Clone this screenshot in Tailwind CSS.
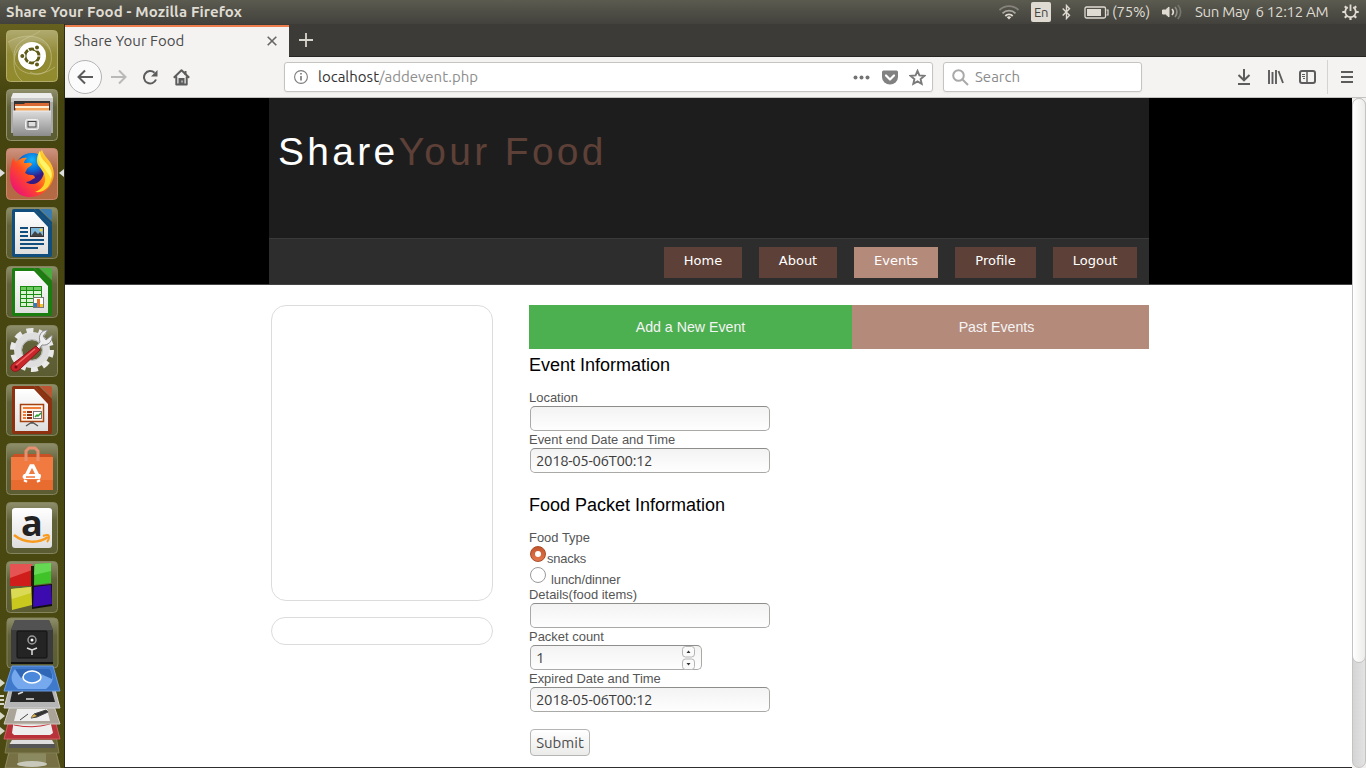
<!DOCTYPE html>
<html lang="en">
<head>
<meta charset="utf-8">
<title>Share Your Food</title>
<script src="https://cdn.jsdelivr.net/npm/@tailwindcss/browser@4"></script>
</head>
<body class="w-[1366px] h-[768px] overflow-hidden flex flex-col bg-white font-['Ubuntu','Noto_Sans',sans-serif]">

<!-- System panel -->
<header class="h-6 shrink-0 flex items-center justify-between bg-linear-to-b from-[#5c5b50] to-[#42413c] text-[#dfdbd2]">
  <div class="pl-[6px] text-[15px] font-bold leading-6 tracking-[0.12px] whitespace-nowrap">Share Your Food - Mozilla Firefox</div>
  <div class="flex items-center pr-[7px] text-[15px] leading-6 whitespace-nowrap">
    <svg width="20" height="16" viewBox="0 0 20 16" fill="none" stroke-width="1.800" class="mr-[12px]"><path d="M0.500 6a13.500 13.500 0 0 1 19 0" stroke="#85837b"/><path d="M3.500 9.300a9.200 9.200 0 0 1 13 0" stroke="#aaa79f"/><path d="M6.300 12a5.300 5.300 0 0 1 7.400 0" stroke="#dfdbd2"/><path d="M10 15.500L7.800 13.300a3.200 3.200 0 0 1 4.400 0z" fill="#dfdbd2"/></svg>
    <span class="w-5 h-5 rounded-[2px] bg-[#dfdbd2] text-[#45443f] text-[13px] leading-5 text-center mr-[11px] tracking-[-0.3px]">En</span>
    <svg width="9" height="16" viewBox="0 0 9 16" fill="none" stroke="#dfdbd2" stroke-width="1.400" class="mr-[13px]"><path d="M0.700 4.500L7.500 11.300 4.500 14.500V1.500L7.500 4.700 0.700 11.500"/></svg>
    <svg width="25" height="13" viewBox="0 0 25 13" class="mr-[3px]"><rect x="1" y="1" width="20.500" height="11" rx="1.500" fill="none" stroke="#dfdbd2" stroke-width="1.300"/><rect x="3" y="3" width="14" height="7" fill="#dfdbd2"/><path d="M22.500 4h1.500v5h-1.500" fill="none" stroke="#dfdbd2" stroke-width="1.200"/></svg>
    <span class="w-[38px] mr-[12px]"><span class="tracking-[-0.2px]">(75%)</span></span>
    <svg width="20" height="16" viewBox="0 0 20 16" fill="none" stroke-width="1.700" class="mr-[13px]"><path d="M0.500 6h3L7 3v10L3.500 10h-3z" fill="#dfdbd2" stroke="#dfdbd2" stroke-width="1"/><path d="M10 5a4.500 4.500 0 0 1 0 6" stroke="#dfdbd2"/><path d="M13 3a7.500 7.500 0 0 1 0 10" stroke="#8f8d85"/><path d="M15.800 1a10 10 0 0 1 0 14" stroke="#77756d"/></svg>
    <span class="w-[134px] mr-[13px]"><span class="tracking-[-0.3px] whitespace-pre">Sun May  6 12:12 AM</span></span>
    <svg width="17" height="16" viewBox="0 0 17 16" fill="none" stroke="#dfdbd2" stroke-width="1.800"><path d="M5.800 3.300a5.300 5.300 0 1 0 5.400 0M8.500 0.500v6.500"/><path d="M0.300 8h3M13.700 8h3M8.500 13v3M2.800 2.300l2 2M14.200 2.300l-2 2M2.800 13.700l2-2M14.200 13.700l-2-2" stroke-width="2.200"/></svg>
  </div>
</header>

<div class="flex flex-1 min-h-0">

<!-- Launcher -->
<aside class="w-[65px] shrink-0 flex flex-col items-start pt-[6px] pl-[6px] gap-[7px] border-r border-[#2c2c14] bg-linear-to-b from-[#67611f] via-[#45440f] via-10% to-[#4c4a12] relative overflow-hidden">
  <svg class="shrink-0" width="52" height="52" viewBox="0 0 52 52">
    <defs>
      <linearGradient id="gold" x2="0" y2="1"><stop stop-color="#b0aa70"/><stop offset=".45" stop-color="#918a36"/><stop offset="1" stop-color="#928b2c"/></linearGradient>
      <linearGradient id="tile" x2="0" y2="1"><stop stop-color="#8f8f6c"/><stop offset=".35" stop-color="#62623a"/><stop offset="1" stop-color="#5c5c32"/></linearGradient>
      <linearGradient id="silver" x2="0" y2="1"><stop stop-color="#dcdcdc"/><stop offset="1" stop-color="#8c8c8c"/></linearGradient>
      <linearGradient id="paper" x2="0" y2="1"><stop stop-color="#ffffff"/><stop offset="1" stop-color="#dedede"/></linearGradient>
    </defs>
    <rect x=".5" y=".5" width="51" height="51" rx="4" fill="url(#gold)" stroke="#b3ad6d"/>
    <g fill="none" stroke="#c9c491" stroke-opacity=".6"><path d="M2 12C18 2 42 4 45 23S33 48 24 42"/><path d="M8 27C8 8 26 8 34 1"/><path d="M8 27C8 44 32 50 49 37"/><path d="M16 51C5 42 6 24 15 16"/></g>
    <path d="M2 12C18 2 42 4 45 23C38 8 20 5 8 27z" fill="#fff" opacity=".12"/>
    <circle cx="26" cy="27" r="14" fill="#6b6420" opacity=".4"/><circle cx="26" cy="26" r="14" fill="#fff"/>
    <circle cx="26" cy="26" r="7" fill="none" stroke="#5f5a16" stroke-width="3"/>
    <g stroke="#fff" stroke-width="1.200"><path d="M26 26h13M26 26l-6.500-11.300M26 26l-6.500 11.300"/></g><circle cx="26" cy="26" r="5.200" fill="#fff"/>
    <g fill="#5f5a16" stroke="#fff" stroke-width="1.200"><circle cx="16.300" cy="26" r="2.600"/><circle cx="31" cy="17.500" r="2.600"/><circle cx="31" cy="34.500" r="2.600"/></g>
  </svg>
  <svg class="shrink-0" width="52" height="52" viewBox="0 0 52 52">
    <rect x=".5" y=".5" width="51" height="51" rx="4" fill="url(#tile)" stroke="#92926b"/>
    <path d="M7 4h38l2 6v34H5V10z" fill="#a9a9a9"/><path d="M7 4h38l2 5H5z" fill="#ececec"/><path d="M5 9h42v4H5z" fill="#c9c9c9"/>
    <rect x="8" y="12" width="36" height="10" fill="#333"/><path d="M9 15h9l1-1h24v8H9z" fill="#d96a35"/><path d="M9 17h34v2H9z" fill="#fff1d8"/><path d="M10 19h33v4H10z" fill="#f3a55c"/>
    <rect x="7" y="22" width="38" height="25" rx="1" fill="url(#silver)"/><path d="M7 22h38" stroke="#eee"/>
    <rect x="19.500" y="30.500" width="13" height="10" rx="2" fill="#d0d0d0" stroke="#efefef"/><rect x="22" y="32.500" width="8" height="5.500" fill="#ddd" stroke="#444"/>
  </svg>
  <svg class="shrink-0" width="52" height="52" viewBox="0 0 52 52">
    <defs><linearGradient id="fx" x1="1" y1="0" x2=".1" y2=".9"><stop stop-color="#fff04a"/><stop offset=".38" stop-color="#ffa416"/><stop offset=".65" stop-color="#ff4a25"/><stop offset="1" stop-color="#ed1277"/></linearGradient><linearGradient id="fire" x2="0" y2="1"><stop stop-color="#cf9380"/><stop offset=".4" stop-color="#ae6947"/><stop offset="1" stop-color="#b56a43"/></linearGradient><radialGradient id="globe" cy=".2"><stop stop-color="#12b5fa"/><stop offset=".6" stop-color="#0869d8"/><stop offset="1" stop-color="#371b84"/></radialGradient></defs>
    <rect x=".5" y=".5" width="51" height="51" rx="4" fill="url(#fire)" stroke="#c88a6f"/>
    <circle cx="26" cy="22" r="17" fill="url(#globe)"/>
    <path d="M5 18C5 14 7 11 8 9c0 2 1 4 2 5 3-3 7-5 11-4-2 2-3 3-3 5 3 0 7-1 8 1 0 2-4 3-5 5l-2 4c2 1 3 2 7 2 2 0 3 2 3 3-3 1-5 4-9 4 5 4 13 2 16-4 3-5 2-9 0-11-2-5-4-10-3-14l3-3c1 4 5 8 8 12 5 8 5 15 1 22-5 9-13 13-21 13C12 49 4 40 4 28c0-3 0-7 1-10z" fill="url(#fx)"/>
    <path d="M34 3c0 5 2 8 6 12 6 6 7 13 4 20-2 6-8 10-15 9 8-3 11-9 10-15-1-5-4-8-7-12-2-5-1-10 2-14z" fill="#ffd62c"/>
    <path d="M34 3c0 5 2 8 6 12 5 5 7 10 5 16-2-5-5-8-8-12-5-6-6-11-3-16z" fill="#fff36a"/>
  </svg>
  <svg class="shrink-0" width="52" height="52" viewBox="0 0 52 52">
    <rect x=".5" y=".5" width="51" height="51" rx="4" fill="url(#tile)" stroke="#84845e"/>
    <path d="M8 2h20l18 17v29q0 2-2 2H8q-2 0-2-2V4q0-2 2-2z" fill="#114d7d"/><path d="M28 2h5l13 13v4z" fill="#114d7d"/><path d="M34 2h10q2 0 2 2v10z" fill="#3a7cb0"/>
    <path d="M9 5h19l14 15v27H9z" fill="url(#paper)"/>
    <path d="M14 21h8M14 25h8M14 29h8M14 33h24M14 37h24M14 41h18" stroke="#114d7d" stroke-width="2"/>
    <rect x="24.500" y="20.500" width="13" height="9" fill="#7db9dd" stroke="#333"/><path d="M25 29l4-5 3 3 2-2 3 4z" fill="#444"/><circle cx="35" cy="23" r="1.500" fill="#f4d03f"/>
  </svg>
  <svg class="shrink-0" width="52" height="52" viewBox="0 0 52 52">
    <rect x=".5" y=".5" width="51" height="51" rx="4" fill="url(#tile)" stroke="#84845e"/>
    <path d="M8 2h20l18 17v29q0 2-2 2H8q-2 0-2-2V4q0-2 2-2z" fill="#1a7d0f"/><path d="M28 2h5l13 13v4z" fill="#1a7d0f"/><path d="M34 2h10q2 0 2 2v10z" fill="#47ad3b"/>
    <path d="M9 5h19l14 15v27H9z" fill="url(#paper)"/>
    <rect x="14.500" y="20.500" width="21" height="20" fill="#d9f3d3" stroke="#1a8a10"/><path d="M15 21h20v3H15z" fill="#6fca63"/><path d="M14 24.500h22M14 28.500h22M14 32.500h22M14 36.500h22M20.500 20v21M27.500 20v21" stroke="#1a8a10"/>
    <rect x="27.500" y="31.500" width="10" height="10" fill="#fff" stroke="#777"/><path d="M28 37h3v4h-3z" fill="#2a7dc5"/><path d="M31 33h3v8h-3z" fill="#e3701e"/><path d="M34 38h3v3h-3z" fill="#f1c62c"/>
  </svg>
  <svg class="shrink-0" width="52" height="52" viewBox="0 0 52 52">
    <rect x=".5" y=".5" width="51" height="51" rx="4" fill="url(#tile)" stroke="#84845e"/>
    <circle cx="26" cy="25" r="14" fill="none" stroke="#dedede" stroke-width="8"/><circle cx="26" cy="25" r="19.500" fill="none" stroke="#e9e9e9" stroke-width="5" stroke-dasharray="7 5.250"/>
    <circle cx="26" cy="25" r="10.500" fill="none" stroke="#b5b5b5"/>
    <path d="M28 24l6-7c-2-6 1-12 8-12l-5 6 3 4 6-5c1 6-4 11-10 10l-6 8z" fill="#eee" stroke="#888"/>
    <path d="M30 21l4 4-20 19c-3 3-6 3-8 1s-1-5 2-7z" fill="#c9252b" stroke="#8f1419"/><path d="M29 24L10 40" stroke="#ee6b6b" stroke-width="1.500"/><circle cx="10" cy="42" r="1.500" fill="#6d0f12"/>
  </svg>
  <svg class="shrink-0" width="52" height="52" viewBox="0 0 52 52">
    <rect x=".5" y=".5" width="51" height="51" rx="4" fill="url(#tile)" stroke="#84845e"/>
    <path d="M8 2h20l18 17v29q0 2-2 2H8q-2 0-2-2V4q0-2 2-2z" fill="#8d3110"/><path d="M28 2h5l13 13v4z" fill="#8d3110"/><path d="M34 2h10q2 0 2 2v10z" fill="#bd5532"/>
    <path d="M9 5h19l14 15v27H9z" fill="url(#paper)"/>
    <rect x="14.500" y="20.500" width="23" height="17" fill="#fff3e8" stroke="#a3410f" stroke-width="1.500"/><path d="M17 24h18" stroke="#ef7d3a" stroke-width="2"/><path d="M17 28h3M17 31h3M17 34h3" stroke="#ef7d3a" stroke-width="2"/><path d="M21 28h5M21 31h5M21 34h5" stroke="#8d3110" stroke-width="2"/><rect x="27.500" y="27.500" width="8" height="7" fill="#fff" stroke="#777"/><path d="M29 33l2-2 1 1 3-3" stroke="#24a12a" stroke-width="1.500" fill="none"/><path d="M26 38l-6 4M26 38l6 4M24 39h4" stroke="#555" stroke-width="1.500"/>
  </svg>
  <svg class="shrink-0" width="52" height="52" viewBox="0 0 52 52">
    <rect x=".5" y=".5" width="51" height="51" rx="4" fill="url(#tile)" stroke="#84845e"/>
    <path d="M6 14l2-3h36l3 3z" fill="#c95023"/><path d="M5 14h42v33H5z" fill="#f07a3f"/><path d="M5 37h42v10H5z" fill="#e86c2f"/>
    <path d="M20 18V8l3-3h6l3 3v10" fill="none" stroke="#e79070" stroke-width="3"/>
    <g fill="none" stroke="#fff" stroke-width="3.500"><path d="M20 33l5-10h2l5 10M19 39l1-2M33 39l-1-2"/></g><path d="M18 31h16q2 1 0 5H18q-3-2 0-5z" fill="#fff"/><path d="M20 34h9" stroke="#ef7438" stroke-width="1.500"/>
  </svg>
  <svg class="shrink-0 overflow-visible" width="52" height="52" viewBox="0 0 52 52">
    <rect x=".5" y=".5" width="51" height="51" rx="4" fill="url(#tile)" stroke="#84845e"/>
    <rect x="6" y="6" width="40" height="40" rx="3" fill="url(#paper)"/>
    <text x="15" y="34" font-family="Open Sans, Noto Sans, sans-serif" font-size="36" font-weight="bold" fill="#222">a</text>
    <path d="M8 33c10 8 24 9 34 2" fill="none" stroke="#f79a1e" stroke-width="2.500"/><path d="M37 34c5-2 6-1 6 1s-1 4-2 5" fill="none" stroke="#f79a1e" stroke-width="2"/>
  </svg>
  <svg class="shrink-0" width="52" height="52" viewBox="0 0 52 52">
    <rect x=".5" y=".5" width="51" height="51" rx="4" fill="url(#tile)" stroke="#84845e"/>
    <path d="M26 25l20-2v22l-20 3z" fill="#111"/>
    <path d="M4 3h22v22H4z" fill="#cf1d1b"/><path d="M4 3h22v6L4 17z" fill="#e55452"/><path d="M29 3l16-1v20l-17 2z" fill="#3fc328"/><path d="M29 3l16-1v8L28 14z" fill="#66d952"/><path d="M5 28l20-2 1 18-20 5z" fill="#c9c81f"/><path d="M5 28l20-2v6L6 38z" fill="#dbda54"/><path d="M28 26l17-2 1 19-19 3z" fill="#3c0bb0"/><path d="M25 5h3v20h-3z" fill="#172008"/>
  </svg>
  <svg class="shrink-0 -ml-[6px] -mt-[7px]" width="64" height="155" viewBox="0 0 64 155">
    <rect x="7" y="5" width="51" height="50" rx="4" fill="url(#tile)" stroke="#84845e"/>
    <path d="M15 7h34l4 10v34H11V17z" fill="#3c3c3c"/><path d="M15 7h34l4 10H11z" fill="#525252"/><rect x="17" y="18" width="30" height="27" rx="1" fill="#242424" stroke="#111"/><circle cx="32" cy="27" r="4" fill="none" stroke="#999" stroke-width="1.500"/><circle cx="32" cy="27" r="1.500" fill="#fff"/><path d="M32 37v5M32 37l-5-2M32 37l5-2" stroke="#ddd" stroke-width="1.500"/><path d="M11 50h42" stroke="#111" stroke-width="2"/>
    <path d="M11 131h43l6 24H5z" fill="#777044" stroke="#918b60"/><path d="M18 138h28v13H18z" fill="#8b895f"/><ellipse cx="32" cy="151" rx="15" ry="3" fill="#c8c8bb"/>
    <path d="M9 117h46l4 23H5z" fill="#6a6538" stroke="#827d52"/><path d="M12 127h40l3 5v3H9v-3z" fill="#ddd"/><path d="M9 131h46v4H9z" fill="#555"/>
    <path d="M9 107h46l5 19H4z" fill="#b8323a" stroke="#d25b61"/><path d="M14 107h36l3 13-3 2H14l-2-2z" fill="#eee"/><path d="M14 112q18 4 36-1" stroke="#c42f35" fill="none"/>
    <path d="M10 93h44l6 18H4z" fill="#aaa397" stroke="#ccc7bd"/><path d="M17 96h30l3 12H14z" fill="#eee"/><path d="M20 107l8-6M31 105l3-4 12-4 2 2-11 5z" stroke="#444" fill="#333"/><path d="M31 105l3-4 3 2z" fill="#ddb14b"/>
    <path d="M10 73h44l6 22H4z" fill="#b5b5b5" stroke="#d5d5d5"/><path d="M13 75h38l4 14H10z" fill="#262626"/><path d="M18 81l5-2M26 86h8" stroke="#ddd" stroke-width="1.500"/>
    <path d="M12 53h41l7 25H4z" fill="#3f79cc" stroke="#6b9bde"/><path d="M15 56h35c5 8 3 14-4 20H18c-8-7-8-13-3-20z" fill="#75a8ec"/><path d="M15 56h35c2 4 3 7 2 10L32 57 21 65z" fill="#2f66b6"/><ellipse cx="32" cy="64" rx="9" ry="6" fill="#4a88db" stroke="#fff" stroke-width="1.500"/>
    <g fill="#d8d8c8"><path d="M0 66l5 4-5 4z"/><path d="M0 82h4v2H0zM0 86h4v2H0zM0 90h4v2H0z"/><path d="M0 99l5 4-5 4zM0 114l5 4-5 4z"/></g>
  </svg>
  <!-- running / focused markers -->
  <span class="absolute left-0 top-[145px] border-y-4 border-l-[5px] border-y-transparent border-l-[#dedede]"></span>
  <span class="absolute right-0 top-[145px] border-y-4 border-r-[5px] border-y-transparent border-r-[#dedede]"></span>
</aside>

<!-- Firefox window -->
<div class="flex-1 min-w-0 flex flex-col">
  <div class="h-[33px] shrink-0 flex items-start bg-[#3c3b37] border-b border-[#272622]">
    <div class="w-[224px] h-[33px] mt-px border-t-2 border-[#ee7d4e] bg-[#f4f3f2] flex items-center justify-between pl-[9px] pr-[12px] text-[15px] text-[#4a4a4a]">
      <span class="-mt-[3px]">Share Your Food</span>
      <svg class="-mt-[3px]" width="10" height="10" viewBox="0 0 10 10" stroke="#666" stroke-width="1.600"><path d="M.7.7l8.600 8.600M9.300.7L.7 9.300"/></svg>
    </div>
    <svg class="ml-[10px] mt-[9px]" width="14" height="14" viewBox="0 0 14 14" stroke="#d8d5cc" stroke-width="1.800"><path d="M7 0v14M0 7h14"/></svg>
  </div>

  <div class="h-[41px] shrink-0 flex items-center bg-[#f4f3f2] border-b border-[#c3c2c0] text-[15px]">
    <div class="w-[34px] h-[34px] ml-[3px] rounded-full border border-[#b3b3b3] bg-[#fbfbfb] flex items-center justify-center">
      <svg width="17" height="16" viewBox="0 0 17 16" fill="none" stroke="#5c5c5c" stroke-width="2"><path d="M16 8H2M8 1.500L1.500 8 8 14.500"/></svg>
    </div>
    <svg class="ml-[8px]" width="17" height="16" viewBox="0 0 17 16" fill="none" stroke="#b9b9b8" stroke-width="2"><path d="M1 8h14M9 1.500L15.500 8 9 14.500"/></svg>
    <svg class="ml-[15px]" width="16" height="16" viewBox="0 0 16 16"><path d="M14 10.500A6.200 6.200 0 1 1 12.500 3.800" fill="none" stroke="#5c5c5c" stroke-width="2"/><path d="M15.500 1v6.500H9z" fill="#5c5c5c"/></svg>
    <svg class="ml-[15px]" width="17" height="17" viewBox="0 0 17 17" fill="none" stroke="#5c5c5c" stroke-width="2"><path d="M.8 8.800L8.500 1.300l7.700 7.500M3.300 7.500v8h10.400v-8" stroke-linejoin="round"/><path d="M6.500 15.500V10h4v5.500" fill="#5c5c5c"/><path d="M12.500 2v4"/><path d="M9 11.500v2" stroke="#f4f3f2" stroke-width="1"/></svg>

    <div class="w-[649px] h-[30px] ml-[94px] flex items-center rounded-[3px] border border-[#c6c4c2] bg-white shadow-xs">
      <svg class="ml-[9px]" width="14" height="14" viewBox="0 0 14 14" fill="none" stroke="#7c7c7c"><circle cx="7" cy="7" r="6.400" stroke-width="1.100"/><path d="M7 6v4.500M7 3v1.600" stroke-width="1.700"/></svg>
      <span class="ml-[10px] w-[400px] text-[#8e8e8e]"><span class="text-[#333]">localhost</span>/addevent.php</span>
      <svg class="ml-[135px]" width="17" height="5" viewBox="0 0 17 5" fill="#737373"><circle cx="2.500" cy="2.500" r="2"/><circle cx="8.500" cy="2.500" r="2"/><circle cx="14.500" cy="2.500" r="2"/></svg>
      <svg class="ml-[12px]" width="16" height="15" viewBox="0 0 16 15"><path d="M1.500.5h13q1.500 0 1.500 1.500v5a8 7.500 0 0 1-16 0V2Q0 .5 1.500.5z" fill="#818181"/><path d="M4 5.500l4 4 4-4" fill="none" stroke="#fff" stroke-width="2.200" stroke-linecap="round" stroke-linejoin="round"/></svg>
      <svg class="ml-[11px]" width="17" height="17" viewBox="0 0 17 17" fill="none" stroke="#7a7a7a" stroke-width="1.900" stroke-linejoin="miter"><path d="M8.500 1.900l1.900 4.500 4.900.5-3.700 3.200 1.100 4.800-4.200-2.500-4.200 2.500 1.100-4.800-3.700-3.200 4.900-.5z"/></svg>
    </div>
    <div class="w-[199px] h-[30px] ml-[10px] flex items-center rounded-[3px] border border-[#c6c4c2] bg-white shadow-xs">
      <svg class="ml-[8px]" width="17" height="17" viewBox="0 0 17 17" fill="none" stroke="#a9a9a9" stroke-width="2"><circle cx="6.500" cy="6.500" r="5.300"/><path d="M10.500 10.500l5.500 5.500"/></svg>
      <span class="ml-[6px] text-[#8b8b8b]">Search</span>
    </div>
    <svg class="ml-[95px]" width="14" height="16" viewBox="0 0 14 16" fill="none" stroke="#5c5c5c" stroke-width="2"><path d="M7 0v11M1.500 6L7 11.300 12.500 6M1 15h12"/></svg>
    <svg class="ml-[17px]" width="16" height="14" viewBox="0 0 16 14" stroke="#5c5c5c" stroke-width="1.900"><path d="M1 0v14M4.500 2v12M8 0v14M10.500 1l4.500 12"/></svg>
    <svg class="ml-[15px]" width="17" height="14" viewBox="0 0 17 14" fill="none" stroke="#5c5c5c"><rect x="1" y="1" width="15" height="12" rx="2" stroke-width="2"/><path d="M8 1v12" stroke-width="1.500"/><path d="M3 4.500h3M3 6.500h3M4 8.500h2" stroke-width="1"/></svg>
    <span class="ml-[11px] w-px h-[34px] bg-[#d4d3d2]"></span>
    <svg class="ml-[13px]" width="12" height="12" viewBox="0 0 12 12" stroke="#5c5c5c" stroke-width="2"><path d="M0 1h12M0 6h12M0 11h12"/></svg>
  </div>

  <div class="flex-1 min-h-0 flex">
    <!-- Web page -->
    <div class="w-[1287px] bg-white border-b border-[#2e2e2e] font-['Liberation_Sans',Arial,sans-serif] text-[#555]">
      <div class="h-[187px] bg-black border-b border-[#444]">
        <div class="w-[880px] ml-[204px] h-[186px] flex flex-col">
          <div class="h-[140px] pt-[31px] pl-[9px] bg-[#1d1d1d] text-[38.9px] leading-[45px] tracking-[3.36px] text-white whitespace-nowrap">Share<span class="text-[#5d4037]">Your Food</span></div>
          <nav class="h-[46px] pt-[8px] pr-[12px] flex justify-end gap-[17px] bg-[#2d2d2d] border-t border-[#3a3a3a] font-['DejaVu_Sans',sans-serif] text-[13px] leading-[27px] text-white text-center">
            <a class="h-[31px] w-[78px] bg-[#5d4037]">Home</a>
            <a class="h-[31px] w-[78px] bg-[#5d4037]">About</a>
            <a class="h-[31px] w-[84px] bg-[#b48a7b]">Events</a>
            <a class="h-[31px] w-[81px] bg-[#5d4037]">Profile</a>
            <a class="h-[31px] w-[84px] bg-[#5d4037]">Logout</a>
          </nav>
        </div>
      </div>
      <div class="flex pt-5 pl-[206px]">
        <div class="w-[222px] flex flex-col gap-4">
          <div class="h-[296px] rounded-[15px] border border-[#dcdcdc]"></div>
          <div class="h-7 rounded-[15px] border border-[#dcdcdc]"></div>
        </div>
        <main class="ml-[36px] w-[620px] text-[12.96px]">
          <div class="flex h-[44px] text-[14.2px] leading-[44px] text-center text-[#f4f4f4]">
            <div class="w-[323px] bg-[#4caf50]">Add a New Event</div>
            <div class="flex-1 bg-[#b48a7b] pr-[8px]">Past Events</div>
          </div>
          <form class="flex flex-col items-start">
            <h2 class="text-[18px] leading-[32px] text-black h-[40px]">Event Information</h2>
            <label class="h-[17px] leading-[17px]">Location</label>
            <div class="ml-px w-[240px] h-[25px] rounded-[5px] border border-[#a9a9a7] border-t-[#8d8d8b] bg-linear-to-b from-[#f3f3f3] to-[#fefefe]"></div>
            <label class="h-[17px] leading-[17px]">Event end Date and Time</label>
            <div class="ml-px w-[240px] h-[25px] rounded-[5px] border border-[#a9a9a7] border-t-[#8d8d8b] bg-linear-to-b from-[#f3f3f3] to-[#fefefe] pl-[5px] leading-[24px] text-[15px] tracking-[-0.38px] text-[#3c3c3c] font-['Ubuntu','Noto_Sans',sans-serif]">2018-05-06T00:12</div>
            <h2 class="mt-4 text-[18px] leading-[32px] text-black h-[40px]">Food Packet Information</h2>
            <label class="h-[17px] leading-[17px]">Food Type</label>
            <label class="h-[21px] flex"><span class="ml-px w-4 h-4 rounded-full border border-[#a84a25] bg-linear-to-b from-[#c4562e] to-[#e4774c] flex items-center justify-center"><span class="w-[6px] h-[6px] rounded-full bg-white"></span></span><span class="ml-px leading-[25px] tracking-[-0.2px]">snacks</span></label>
            <label class="h-[19px] flex"><span class="ml-px w-4 h-4 rounded-full border border-[#9a9a9a] bg-white"></span><span class="ml-[5px] leading-[25px] tracking-[-0.1px]">lunch/dinner</span></label>
            <label class="h-[17px] leading-[17px]">Details(food items)</label>
            <div class="ml-px w-[240px] h-[25px] rounded-[5px] border border-[#a9a9a7] border-t-[#8d8d8b] bg-linear-to-b from-[#f3f3f3] to-[#fefefe]"></div>
            <label class="h-[17px] leading-[17px]">Packet count</label>
            <div class="ml-px w-[172px] h-[25px] rounded-[5px] border border-[#a9a9a7] border-t-[#8d8d8b] bg-linear-to-b from-[#f3f3f3] to-[#fefefe] pl-[5px] pr-[6px] flex justify-between leading-[24px] text-[15px] text-[#3c3c3c] font-['Ubuntu','Noto_Sans',sans-serif]">1
              <svg width="13" height="25" viewBox="0 0 13 25" fill="#fafafa" stroke="#b5b5b5"><rect x=".5" y=".5" width="12" height="10.500" rx="3"/><rect x=".5" y="13" width="12" height="10.500" rx="3"/><path d="M4.500 7l2-2.500 2 2.500zM4.500 17l2 2.500 2-2.500z" fill="#333" stroke="none"/></svg>
            </div>
            <label class="h-[17px] leading-[17px]">Expired Date and Time</label>
            <div class="ml-px w-[240px] h-[25px] rounded-[5px] border border-[#a9a9a7] border-t-[#8d8d8b] bg-linear-to-b from-[#f3f3f3] to-[#fefefe] pl-[5px] leading-[24px] text-[15px] tracking-[-0.38px] text-[#3c3c3c] font-['Ubuntu','Noto_Sans',sans-serif]">2018-05-06T00:12</div>
            <button type="button" class="ml-px mt-[17px] w-[60px] h-[27px] rounded-[4px] border border-[#b5b5b3] bg-linear-to-b from-white to-[#ebebea] text-[15px] leading-[26px] text-[#4c4c4c] font-['Ubuntu','Noto_Sans',sans-serif]">Submit</button>
          </form>
        </main>
      </div>
    </div>
    <!-- Scrollbar -->
    <div class="w-[14px] bg-[#f1f0ef]"><div class="h-[670px] rounded-[7px] border border-[#c4c3c1] bg-linear-to-r from-[#d4d4d4] to-[#e3e3e3]"><div class="-m-px h-[565px] rounded-[7px] border border-[#c4c3c1] bg-linear-to-r from-white to-[#ececeb]"></div></div></div>
  </div>
</div>
</div>
</body>
</html>
